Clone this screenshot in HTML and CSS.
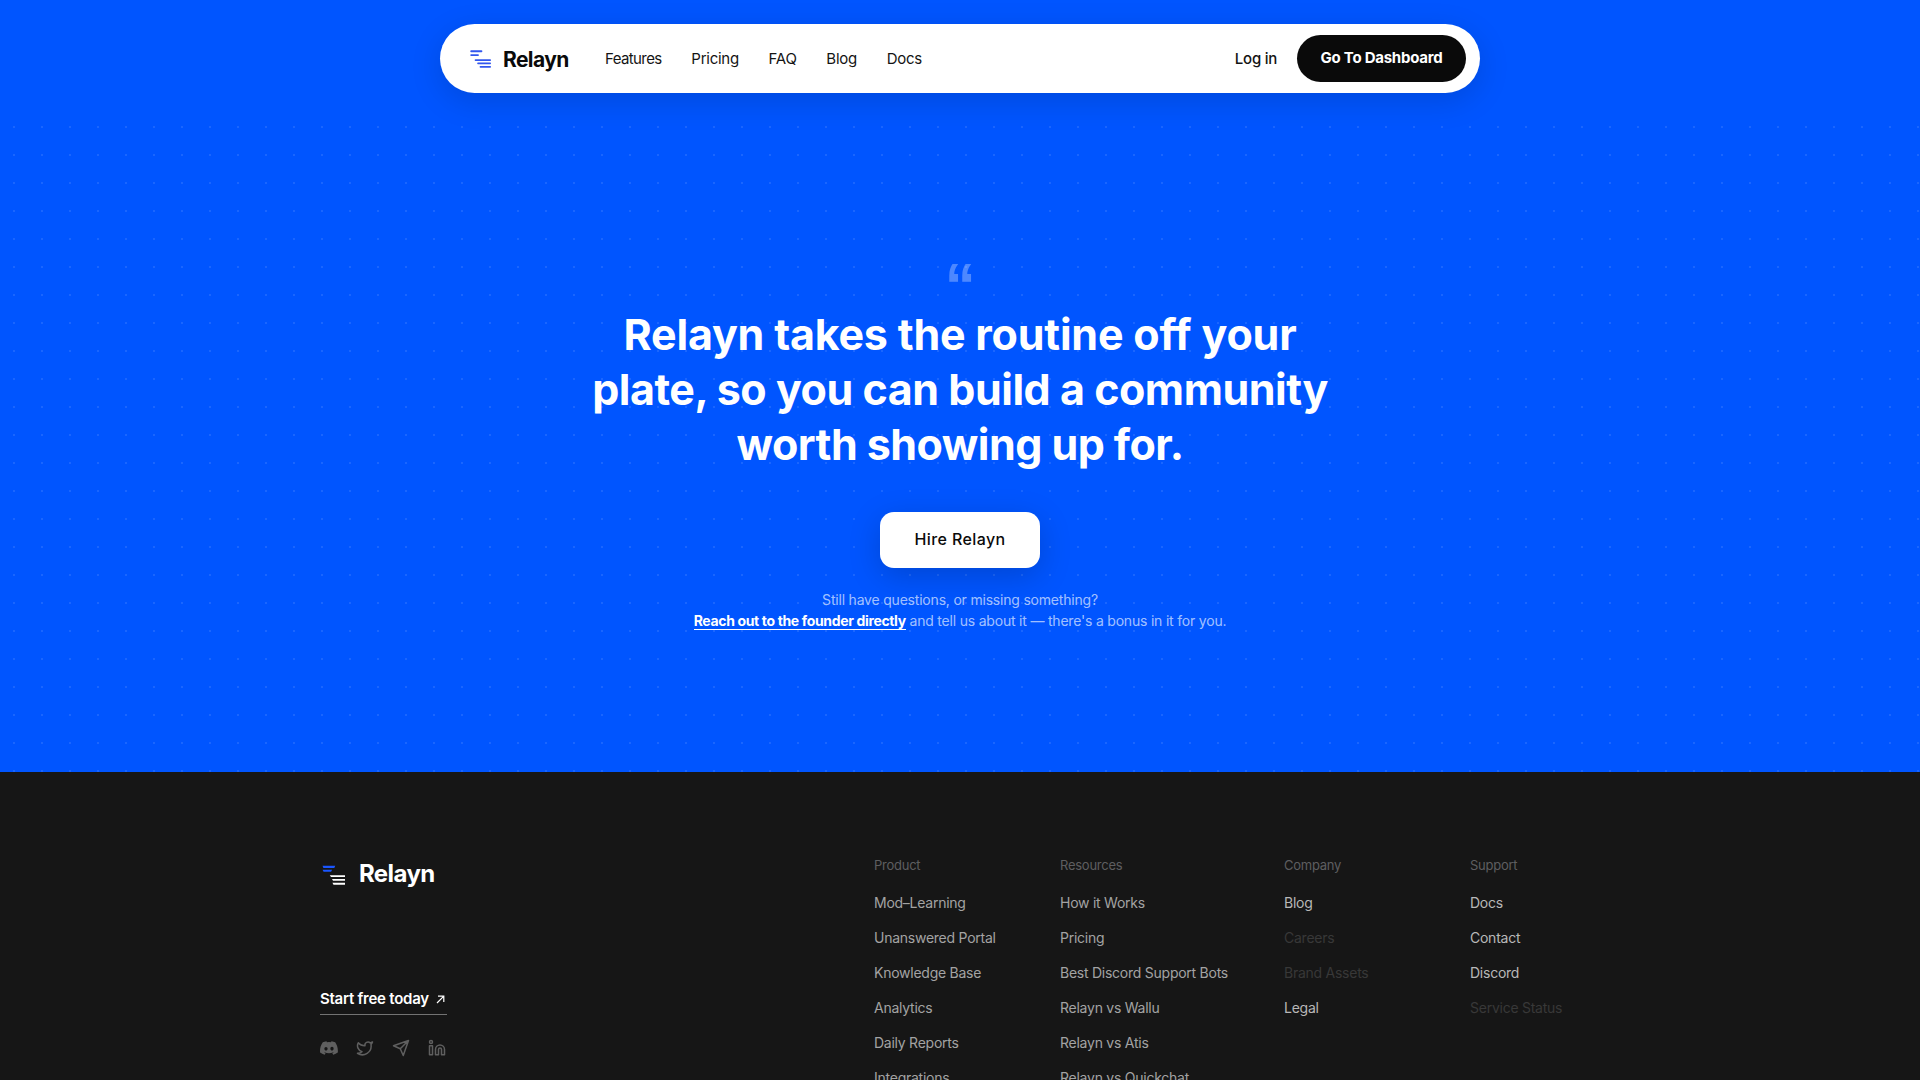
FILE: index.html
```
<!DOCTYPE html>
<html lang="en">
<head>
  <meta charset="UTF-8">
  <title>Relayn</title>
  <link rel="stylesheet" href="styles.css">
</head>
<body>

  <header class="navbar">
    <a class="logo">
      <svg class="logo-icon" width="22" height="20" viewBox="0 0 22 20" fill="#3357ee">
        <rect x="0.3" y="1.3" width="12" height="2" rx="0.8"/>
        <rect x="0.3" y="5.2" width="8.6" height="1.9" rx="0.8"/>
        <rect x="4.7" y="10.2" width="16.3" height="1.8" rx="0.8"/>
        <rect x="7.2" y="13.6" width="13.8" height="1.7" rx="0.8"/>
        <rect x="9.6" y="17" width="11.4" height="1.8" rx="0.8"/>
      </svg>
      <span class="logo-text">Relayn</span>
    </a>
    <nav class="nav-links">
      <a class="nav-features">Features</a>
      <a>Pricing</a>
      <a>FAQ</a>
      <a>Blog</a>
      <a>Docs</a>
    </nav>
    <a class="login">Log in</a>
    <a class="dashboard-btn">Go To Dashboard</a>
  </header>

  <section class="cta">
    <div class="quote-mark">“</div>
    <h2 class="cta-title">
      <span class="line-one">Relayn takes the routine off your</span>
      <span class="line-two">plate, so you can build a community</span>
      <span class="line-three">worth showing up for.</span>
    </h2>
    <a class="hire-btn">Hire Relayn</a>
    <p class="cta-note">Still have questions, or missing something?<br><a class="founder-link">Reach out to the founder directly</a> and tell us about it — there's a bonus in it for you.</p>
  </section>

  <footer class="footer">
    <div class="footer-inner">
      <div class="footer-brand">
        <a class="footer-logo">
          <svg width="26" height="24" viewBox="0 0 26 24">
            <path fill="#1a56ff" d="M2.5 2.800h12.800l-1 2.200H3.400zM2.500 6.800h9.600l-1 2H3.600z"/>
            <path fill="#fff" d="M9.800 12.200H25v1.900H11zM12 15.900h13v1.900H13zM12.400 19.800H25v2H13.500z"/>
          </svg>
          <span class="footer-logo-text">Relayn</span>
        </a>
        <a class="start-link">Start free today
          <svg width="9" height="9" viewBox="0 0 9 9" fill="none" stroke="currentColor" stroke-width="1.2"><path d="M1 8L7.600 1.400M2 1.200h5.800V7"/></svg>
        </a>
        <div class="socials">
          <svg width="18" height="18" viewBox="0 0 24 24" fill="currentColor"><path d="M20.3 4.4A19.8 19.8 0 0 0 15.4 2.9a.07.07 0 0 0-.08.04c-.2.37-.44.86-.6 1.25a18.3 18.3 0 0 0-5.5 0 12.6 12.6 0 0 0-.6-1.25.08.08 0 0 0-.08-.04A19.7 19.7 0 0 0 3.7 4.4C.5 9-.3 13.6.1 18.1a.08.08 0 0 0 .03.05 19.9 19.9 0 0 0 6 3 .08.08 0 0 0 .08-.03c.46-.63.87-1.3 1.2-2a.08.08 0 0 0-.04-.1 13 13 0 0 1-1.9-.9.08.08 0 0 1 0-.13l.4-.3a14.2 14.2 0 0 0 12.1 0l.4.3a.08.08 0 0 1 0 .13c-.6.35-1.2.65-1.9.9a.08.08 0 0 0-.04.1c.36.7.77 1.4 1.2 2a.08.08 0 0 0 .08.03 19.8 19.8 0 0 0 6-3 .08.08 0 0 0 .03-.05c.5-5.2-.8-9.7-3.5-13.7zM8 15.3c-1.2 0-2.15-1.08-2.15-2.42S6.8 10.5 8 10.5s2.18 1.1 2.16 2.4c0 1.34-.95 2.4-2.16 2.4zm8 0c-1.18 0-2.16-1.08-2.16-2.42s.96-2.4 2.16-2.4 2.18 1.1 2.16 2.4c0 1.34-.95 2.4-2.16 2.4z"/></svg>
          <svg width="18" height="18" viewBox="0 0 24 24" fill="none" stroke="currentColor" stroke-width="2" stroke-linecap="round" stroke-linejoin="round"><path d="M22 4s-.7 2.1-2 3.4c1.6 10-9.4 17.3-18 11.6 2.2.1 4.4-.6 6-2C3 15.5.5 9.6 3 5c2.2 2.6 5.6 4.1 9 4-.9-4.2 4-6.6 7-3.8 1.1 0 3-1.2 3-1.2z"/></svg>
          <svg width="18" height="18" viewBox="0 0 24 24" fill="none" stroke="currentColor" stroke-width="2" stroke-linecap="round" stroke-linejoin="round"><path d="M22 2L15 22l-4-9-9-4zM22 2L11 13"/></svg>
          <svg width="18" height="18" viewBox="0 0 24 24" fill="none" stroke="currentColor" stroke-width="2" stroke-linecap="round" stroke-linejoin="round"><path d="M16 8a6 6 0 0 1 6 6v7h-4v-7a2 2 0 0 0-4 0v7h-4v-7a6 6 0 0 1 6-6z"/><rect x="2" y="9" width="4" height="12"/><circle cx="4" cy="4" r="2"/></svg>
        </div>
      </div>

      <div class="footer-cols">
        <div class="footer-col">
          <h4>Product</h4>
          <a>Mod–Learning</a>
          <a>Unanswered Portal</a>
          <a>Knowledge Base</a>
          <a>Analytics</a>
          <a>Daily Reports</a>
          <a>Integrations</a>
        </div>
        <div class="footer-col">
          <h4>Resources</h4>
          <a>How it Works</a>
          <a>Pricing</a>
          <a>Best Discord Support Bots</a>
          <a>Relayn vs Wallu</a>
          <a>Relayn vs Atis</a>
          <a>Relayn vs Quickchat</a>
        </div>
        <div class="footer-col bright">
          <h4>Company</h4>
          <a>Blog</a>
          <a class="disabled">Careers</a>
          <a class="disabled">Brand Assets</a>
          <a>Legal</a>
        </div>
        <div class="footer-col bright">
          <h4>Support</h4>
          <a>Docs</a>
          <a>Contact</a>
          <a>Discord</a>
          <a class="disabled">Service Status</a>
        </div>
      </div>
    </div>
  </footer>

</body>
</html>
```
FILE: styles.css
```
* {
  box-sizing: border-box;
}

body {
  margin: 0;
  height: 100vh;
  overflow: hidden;
  display: flex;
  flex-direction: column;
  background: #0055ff;
  font-family: Inter, sans-serif;
  letter-spacing: -0.25px;
}

/* navbar */
.navbar {
  flex: none;
  display: flex;
  align-items: center;
  width: 1040px;
  height: 69px;
  margin: 24px auto 20px;
  padding: 0 14px 0 30px;
  background: #fff;
  border-radius: 35px;
  box-shadow: 0 8px 32px rgba(0, 0, 0, 0.14);
  color: #141414;
  font-size: 15px;
}

.logo {
  display: flex;
  align-items: center;
  gap: 11px;
  width: 135px;
}

.logo-text {
  padding-top: 1px;
  color: #0a0a0a;
  font-size: 21px;
  font-weight: 700;
  letter-spacing: -0.6px;
}

.nav-links {
  display: flex;
  gap: 29.7px;
  flex: 1;
  padding-bottom: 1px;
}

.nav-features {
  letter-spacing: -0.6px;
}

.login {
  margin-right: 20px;
  padding-bottom: 1px;
  font-weight: 500;
}

.dashboard-btn {
  width: 169px;
  height: 47px;
  background: #0a0a0a;
  color: #fff;
  border-radius: 24px;
  font-weight: 700;
  line-height: 45px;
  text-align: center;
}

/* call to action */
.cta {
  flex: none;
  display: flex;
  flex-direction: column;
  align-items: center;
  height: 659px;
  padding-top: 143px;
  background-image: radial-gradient(rgba(255, 255, 255, 0.1) 1px, transparent 1px);
  background-size: 28px 28px;
  color: #fff;
}

.quote-mark {
  height: 51px;
  color: rgba(255, 255, 255, 0.3);
  font-family: "Liberation Sans", sans-serif;
  font-size: 62px;
  font-weight: 700;
  line-height: 57px;
}

.cta-title {
  margin: 0;
  font-size: 43px;
  font-weight: 700;
  line-height: 55px;
  text-align: center;
}

.cta-title span {
  display: block;
}

.line-one {
  letter-spacing: -0.2px;
}

.line-two {
  letter-spacing: -0.47px;
}

.line-three {
  letter-spacing: -0.54px;
}

.hire-btn {
  width: 160px;
  height: 56px;
  margin-top: 40px;
  background: #fff;
  border-radius: 14px;
  box-shadow: 0 8px 32px rgba(0, 0, 0, 0.18);
  color: #0a0a0a;
  font-size: 16px;
  font-weight: 500;
  letter-spacing: 0.39px;
  line-height: 54px;
  text-align: center;
}

.cta-note {
  margin: 21px 0 0;
  color: rgba(255, 255, 255, 0.65);
  font-size: 14px;
  letter-spacing: -0.2px;
  line-height: 21px;
  text-align: center;
}

.founder-link {
  color: #fff;
  font-weight: 700;
  letter-spacing: -0.35px;
  border-bottom: 1px solid #fff;
}

/* footer */
.footer {
  flex: 1;
  min-height: 0;
  background: #161616;
}

.footer-inner {
  display: flex;
  justify-content: space-between;
  width: 1280px;
  margin: 0 auto;
  padding-top: 83px;
}

.footer-brand {
  display: flex;
  flex-direction: column;
  align-items: flex-start;
  padding-top: 4px;
}

.footer-logo {
  display: flex;
  align-items: center;
  gap: 13px;
  height: 30px;
}

.footer-logo svg {
  margin-top: 1px;
}

.footer-logo-text {
  color: #fff;
  font-size: 24px;
  font-weight: 700;
  letter-spacing: -0.6px;
  line-height: 30px;
}

.start-link {
  display: flex;
  align-items: center;
  gap: 7px;
  width: 127px;
  margin-top: 99px;
  padding-bottom: 4px;
  border-bottom: 1px solid #737373;
  color: #fff;
  font-size: 15px;
  font-weight: 600;
  line-height: 22px;
  white-space: nowrap;
}

.socials {
  display: flex;
  gap: 18px;
  margin-top: 24px;
  color: #5f5f5f;
}

.footer-cols {
  display: grid;
  grid-template-columns: 130px 168px 130px 130px;
  column-gap: 56px;
}

.footer-col {
  display: flex;
  flex-direction: column;
  gap: 14px;
  color: #a3a3a3;
  font-size: 14px;
  line-height: 21px;
  white-space: nowrap;
}

.footer-col h4 {
  margin: 0 0 3px;
  color: #5e5e60;
  font-size: 13px;
  font-weight: 400;
  line-height: 20px;
}

.bright {
  color: #b8b8b8;
}

.footer-col .disabled {
  color: #383838;
}
```
